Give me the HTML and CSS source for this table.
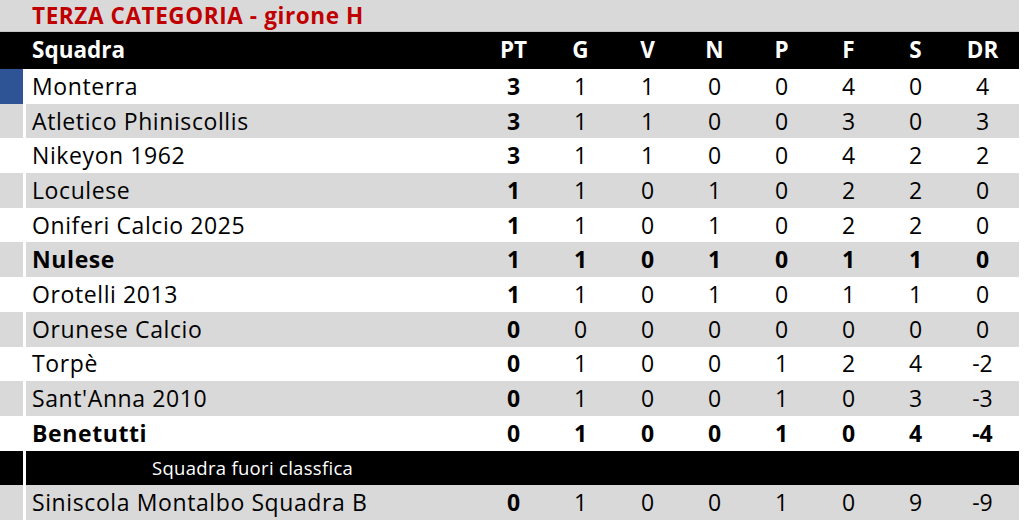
FILE: index.html
```html
<!DOCTYPE html>
<html lang="it">
<head>
<meta charset="utf-8">
<title>Terza Categoria - girone H</title>
<link rel="stylesheet" href="styles.css">
</head>
<body>
<div class="sheet">
  <div class="title-row"><span class="title">TERZA CATEGORIA - girone H</span></div>
  <div class="row head">
    <div class="gut"></div>
    <div class="cells">
      <div class="name">Squadra</div>
      <div class="n">PT</div><div class="n">G</div><div class="n">V</div><div class="n">N</div><div class="n">P</div><div class="n">F</div><div class="n">S</div><div class="n">DR</div>
    </div>
  </div>
  <div class="row w first">
    <div class="gut blue"></div>
    <div class="cells"><div class="name">Monterra</div><div class="n b">3</div><div class="n">1</div><div class="n">1</div><div class="n">0</div><div class="n">0</div><div class="n">4</div><div class="n">0</div><div class="n">4</div></div>
  </div>
  <div class="row g">
    <div class="gut"></div>
    <div class="cells"><div class="name">Atletico Phiniscollis</div><div class="n b">3</div><div class="n">1</div><div class="n">1</div><div class="n">0</div><div class="n">0</div><div class="n">3</div><div class="n">0</div><div class="n">3</div></div>
  </div>
  <div class="row w">
    <div class="gut"></div>
    <div class="cells"><div class="name">Nikeyon 1962</div><div class="n b">3</div><div class="n">1</div><div class="n">1</div><div class="n">0</div><div class="n">0</div><div class="n">4</div><div class="n">2</div><div class="n">2</div></div>
  </div>
  <div class="row g">
    <div class="gut"></div>
    <div class="cells"><div class="name">Loculese</div><div class="n b">1</div><div class="n">1</div><div class="n">0</div><div class="n">1</div><div class="n">0</div><div class="n">2</div><div class="n">2</div><div class="n">0</div></div>
  </div>
  <div class="row w">
    <div class="gut"></div>
    <div class="cells"><div class="name">Oniferi Calcio 2025</div><div class="n b">1</div><div class="n">1</div><div class="n">0</div><div class="n">1</div><div class="n">0</div><div class="n">2</div><div class="n">2</div><div class="n">0</div></div>
  </div>
  <div class="row g bold">
    <div class="gut"></div>
    <div class="cells"><div class="name">Nulese</div><div class="n">1</div><div class="n">1</div><div class="n">0</div><div class="n">1</div><div class="n">0</div><div class="n">1</div><div class="n">1</div><div class="n">0</div></div>
  </div>
  <div class="row w">
    <div class="gut"></div>
    <div class="cells"><div class="name">Orotelli 2013</div><div class="n b">1</div><div class="n">1</div><div class="n">0</div><div class="n">1</div><div class="n">0</div><div class="n">1</div><div class="n">1</div><div class="n">0</div></div>
  </div>
  <div class="row g">
    <div class="gut"></div>
    <div class="cells"><div class="name">Orunese Calcio</div><div class="n b">0</div><div class="n">0</div><div class="n">0</div><div class="n">0</div><div class="n">0</div><div class="n">0</div><div class="n">0</div><div class="n">0</div></div>
  </div>
  <div class="row w">
    <div class="gut"></div>
    <div class="cells"><div class="name">Torpè</div><div class="n b">0</div><div class="n">1</div><div class="n">0</div><div class="n">0</div><div class="n">1</div><div class="n">2</div><div class="n">4</div><div class="n">-2</div></div>
  </div>
  <div class="row g">
    <div class="gut"></div>
    <div class="cells"><div class="name">Sant'Anna 2010</div><div class="n b">0</div><div class="n">1</div><div class="n">0</div><div class="n">0</div><div class="n">1</div><div class="n">0</div><div class="n">3</div><div class="n">-3</div></div>
  </div>
  <div class="row w bold">
    <div class="gut"></div>
    <div class="cells"><div class="name">Benetutti</div><div class="n">0</div><div class="n">1</div><div class="n">0</div><div class="n">0</div><div class="n">1</div><div class="n">0</div><div class="n">4</div><div class="n">-4</div></div>
  </div>
  <div class="row k">
    <div class="gut"></div>
    <div class="cells"><div class="fuori">Squadra fuori classfica</div></div>
  </div>
  <div class="row g">
    <div class="gut"></div>
    <div class="cells"><div class="name">Siniscola Montalbo Squadra B</div><div class="n b">0</div><div class="n">1</div><div class="n">0</div><div class="n">0</div><div class="n">1</div><div class="n">0</div><div class="n">9</div><div class="n">-9</div></div>
  </div>
</div>
</body>
</html>
```

FILE: styles.css
```css
html, body {
  margin: 0;
  padding: 0;
  background: #ffffff;
}
body {
  font-family: "Open Sans", Lato, sans-serif;
  color: #000000;
}
.sheet {
  width: 1019px;
  display: flex;
  flex-direction: column;
}
.title-row {
  height: 32px;
  background: #d9d9d9;
  border-bottom: 1px solid #c4c4c4;
  box-sizing: border-box;
  display: flex;
  align-items: center;
  padding-left: 32px;
}
.title {
  color: #c00000;
  font-weight: 700;
  font-size: 22.5px;
  letter-spacing: 0.6px;
}
.row {
  display: flex;
  gap: 3px;
  height: 34.7px;
}
.row.head {
  height: 37px;
  background: #000000;
  color: #ffffff;
  font-weight: 700;
}
.row.head .cells {
  letter-spacing: 0;
  font-size: 22.5px;
}
.gut {
  width: 23px;
  flex: none;
}
.cells {
  flex: 1;
  display: grid;
  grid-template-columns: 454px repeat(8, 67px) 1fr;
  align-items: center;
  font-size: 23px;
  letter-spacing: 0.6px;
  line-height: 1;
}
.name {
  padding-left: 6px;
  white-space: nowrap;
}
.n {
  text-align: center;
  letter-spacing: 0;
}
.b, .bold .cells {
  font-weight: 700;
}
.row.w .gut, .row.w .cells { background: #ffffff; }
.row.g .gut, .row.g .cells { background: #d9d9d9; }
.row.k .gut, .row.k .cells { background: #000000; }
.gut.blue { background: #2f5496 !important; }
.fuori {
  grid-column: 1 / -1;
  color: #ffffff;
  font-size: 18.5px;
  letter-spacing: 0.3px;
  padding-left: 126px;
}
```
